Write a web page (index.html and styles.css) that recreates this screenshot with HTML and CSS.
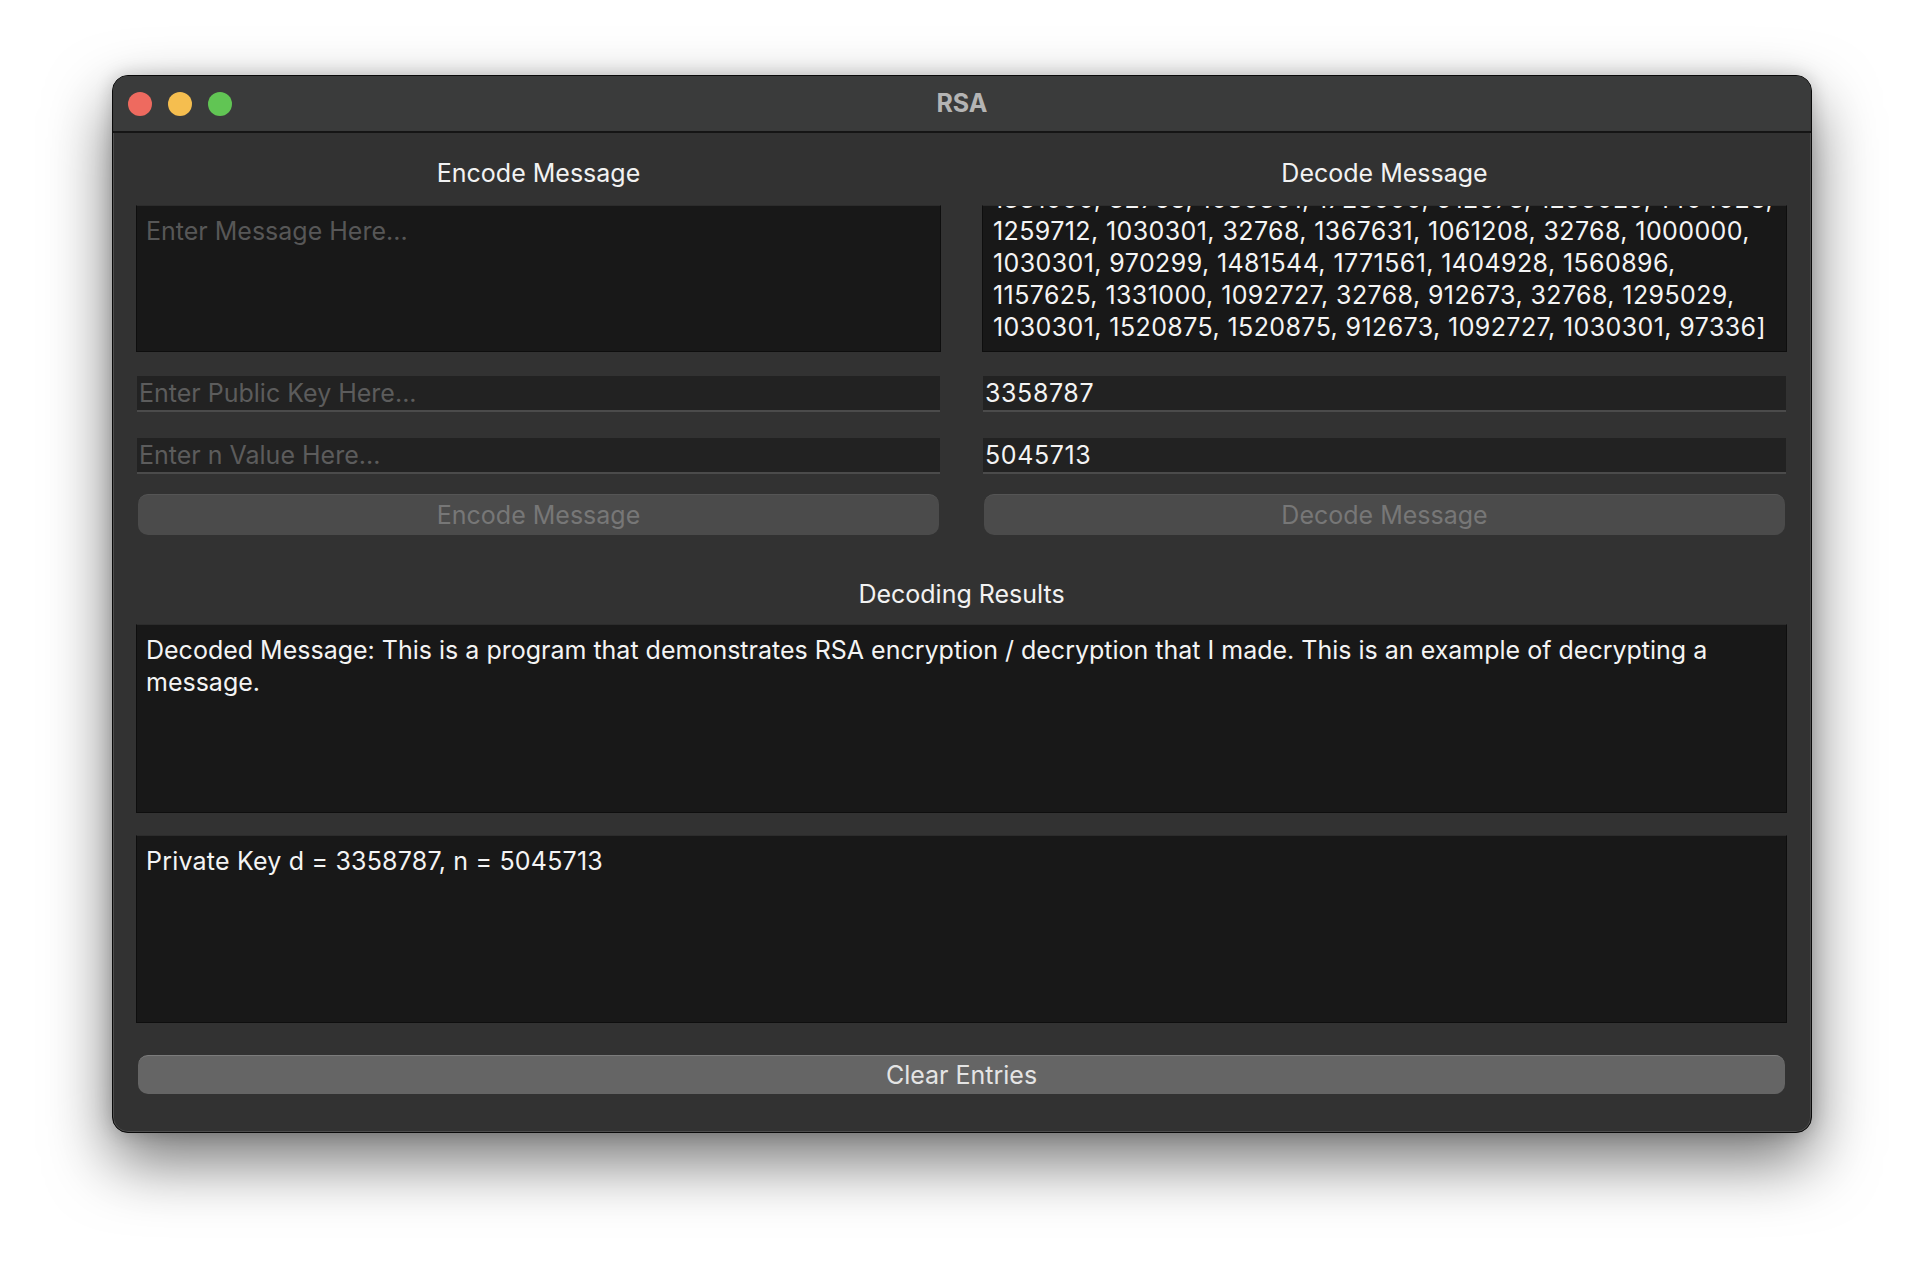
FILE: index.html
```html
<!DOCTYPE html>
<html lang="en">
<head>
    <meta charset="UTF-8">
    <title>RSA</title>
    <meta name="viewport" content="width=device-width, initial-scale=1.0">
    <link rel="stylesheet" href="styles.css">
</head>
<body>
    <div class="window">
        <div class="titlebar">
            <div class="lights">
                <span class="light red"></span>
                <span class="light yellow"></span>
                <span class="light green"></span>
            </div>
            <div class="title">RSA</div>
            <div></div>
        </div>
        <div class="content">
            <div class="columns">
                <div class="column">
                    <div class="heading">Encode Message</div>
                    <textarea class="box message-box" placeholder="Enter Message Here..."></textarea>
                    <input class="field first" type="text" placeholder="Enter Public Key Here...">
                    <input class="field" type="text" placeholder="Enter n Value Here...">
                    <button class="btn" disabled>Encode Message</button>
                </div>
                <div class="column">
                    <div class="heading">Decode Message</div>
                    <div class="box message-box scrolled">
                        <div class="line">1331000, 32768, 1030301, 1728000, 912673, 1295029, 1404928,</div>
                        <div class="line">1259712, 1030301, 32768, 1367631, 1061208, 32768, 1000000,</div>
                        <div class="line">1030301, 970299, 1481544, 1771561, 1404928, 1560896,</div>
                        <div class="line">1157625, 1331000, 1092727, 32768, 912673, 32768, 1295029,</div>
                        <div class="line">1030301, 1520875, 1520875, 912673, 1092727, 1030301, 97336]</div>
                    </div>
                    <input class="field first number" type="text" value="3358787">
                    <input class="field number" type="text" value="5045713">
                    <button class="btn" disabled>Decode Message</button>
                </div>
            </div>
            <div class="heading results-heading">Decoding Results</div>
            <div class="box result">Decoded Message: This is a program that demonstrates RSA encryption / decryption that I made. This is an example of decrypting a message.</div>
            <div class="box result second">Private Key d = 3358787, n = 5045713</div>
            <button class="btn clear">Clear Entries</button>
        </div>
    </div>
</body>
</html>
```

FILE: styles.css
```css
body {
    margin: 0;
    background: #ffffff;
    font-family: Inter, 'Liberation Sans', sans-serif;
    padding-top: 75px;
    min-height: 100vh;
    box-sizing: border-box;
}
.window {
    width: 1700px;
    margin: 0 auto;
    background: #323232;
    border: 1px solid #0a0a0a;
    border-radius: 16px;
    box-sizing: border-box;
    overflow: hidden;
    box-shadow: 0 28px 64px rgba(0,0,0,0.55), 0 0 18px rgba(0,0,0,0.18), inset 0 0 0 1px rgba(255,255,255,0.14);
}
.titlebar {
    height: 57px;
    background: #3a3b3b;
    border-bottom: 2px solid #151515;
    box-sizing: border-box;
    display: grid;
    grid-template-columns: 1fr auto 1fr;
    align-items: center;
}
.lights {
    display: flex;
    gap: 16px;
    padding-left: 15px;
}
.light {
    width: 24px;
    height: 24px;
    border-radius: 50%;
    display: block;
}
.light.red { background: #ee6a5f; }
.light.yellow { background: #f5be4f; }
.light.green { background: #61c554; }
.title {
    color: #b4b4b4;
    font-size: 25px;
    font-weight: 700;
    padding-bottom: 2px;
}
.content {
    padding: 24px 24px 38px 23px;
    display: flex;
    flex-direction: column;
}
.columns {
    display: flex;
    gap: 41px;
}
.column {
    flex: 1 1 0;
    min-width: 0;
    display: flex;
    flex-direction: column;
}
.heading {
    height: 32px;
    line-height: 32px;
    text-align: center;
    color: #f2f2f2;
    font-size: 25px;
    margin-bottom: 16px;
}
.box {
    background: #181818;
    border: 1px solid #0e0e0e;
    border-top-color: #2c2c2c;
    box-sizing: border-box;
    color: #f4f4f4;
    font-family: inherit;
    font-size: 25px;
    line-height: 32px;
    padding: 9px 9px;
    margin: 0;
}
.message-box {
    height: 147px;
    width: 100%;
    resize: none;
    outline: none;
    display: block;
}
.message-box::placeholder {
    color: #575757;
}
.scrolled {
    display: flex;
    flex-direction: column;
    justify-content: flex-end;
    overflow: hidden;
    padding: 9px 9px 8px 10px;
    letter-spacing: 0.4px;
}
.line {
    white-space: nowrap;
    flex: none;
}
.field {
    height: 36px;
    margin: 26px 1px 0;
    background: #222222;
    border: none;
    border-bottom: 2px solid #4b4b4b;
    box-sizing: border-box;
    color: #f4f4f4;
    font-family: inherit;
    font-size: 25px;
    padding: 0 2px;
    outline: none;
}
.field.first {
    margin-top: 24px;
}
.field.number {
    letter-spacing: 0.6px;
}
.field::placeholder {
    color: #5c5c5c;
}
.btn {
    height: 41px;
    margin: 20px 2px 0;
    background: #4b4b4b;
    border: none;
    border-top: 1px solid #555555;
    border-radius: 10px;
    color: #777777;
    font-family: inherit;
    font-size: 25px;
    padding: 0;
}
.results-heading {
    margin: 43px 0 14px;
}
.result {
    height: 189px;
}
.result.second {
    height: 188px;
    margin-top: 22px;
    letter-spacing: 0.2px;
}
.btn.clear {
    height: 39px;
    margin-top: 32px;
    background: #656565;
    border-top-color: #7c7c7c;
    color: #e4e4e4;
}
```
